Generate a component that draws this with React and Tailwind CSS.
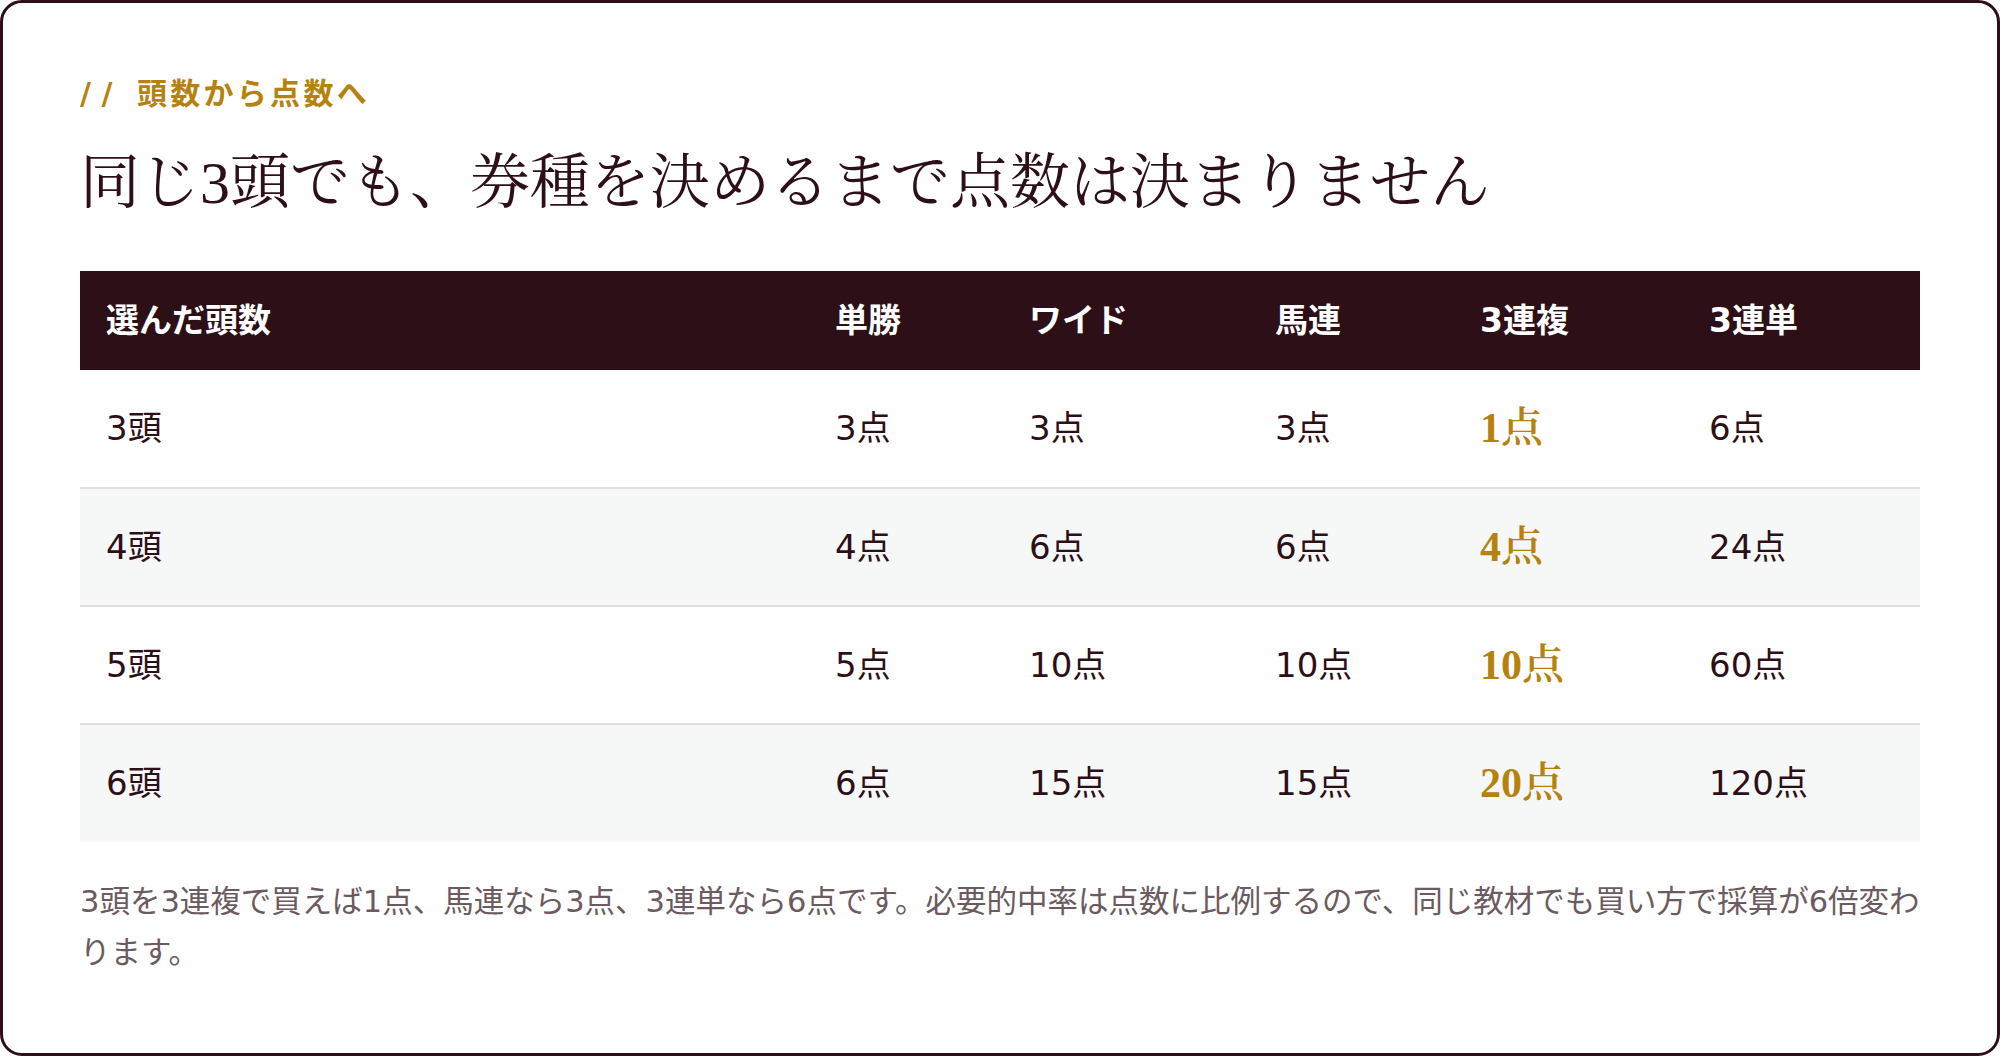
const rows = [
  { heads: "3頭", win: "3点", wide: "3点", quinella: "3点", trio: "1点", trifecta: "6点" },
  { heads: "4頭", win: "4点", wide: "6点", quinella: "6点", trio: "4点", trifecta: "24点" },
  { heads: "5頭", win: "5点", wide: "10点", quinella: "10点", trio: "10点", trifecta: "60点" },
  { heads: "6頭", win: "6点", wide: "15点", quinella: "15点", trio: "20点", trifecta: "120点" },
];

const sans = "font-['DejaVu_Sans','Noto_Sans_CJK_JP',sans-serif]";
const serif = "font-['Liberation_Serif','Noto_Serif_CJK_JP',serif]";

const App = () => {
  return (
    <div className="min-h-screen bg-white">
      <div className={`h-[1056px] border-[3px] border-[#2c0f17] rounded-[22px] px-[77px] pt-[71px] ${sans}`}>
        <p className="text-[30px] leading-[40px] font-bold text-[#b5820f]">
          <span className="tracking-[0.35em]">//</span>
          <span className="ml-[14px] tracking-[0.11em]">頭数から点数へ</span>
        </p>
        <h2 className={`mt-[27px] text-[60px] leading-[84px] text-[#2c0f17] ${serif}`}>
          同じ3頭でも、券種を決めるまで点数は決まりません
        </h2>
        <table className="mt-[46px] w-full border-collapse text-left">
          <thead>
            <tr className="bg-[#2c0f17] text-white h-[99px]">
              <th className="w-[729px] pl-[26px] text-[33px] font-bold">選んだ頭数</th>
              <th className="w-[194px] pl-[26px] text-[33px] font-bold">単勝</th>
              <th className="w-[246px] pl-[26px] text-[33px] font-bold">ワイド</th>
              <th className="w-[205px] pl-[26px] text-[33px] font-bold">馬連</th>
              <th className="w-[229px] pl-[26px] text-[33px] font-bold">3連複</th>
              <th className="w-[237px] pl-[26px] text-[33px] font-bold">3連単</th>
            </tr>
          </thead>
          <tbody>
            {rows.map((r, i) => (
              <tr
                key={r.heads}
                className={`h-[118px] text-[34px] text-[#2c0f17] ${i % 2 === 1 ? "bg-[#f6f7f7]" : "bg-white"} ${i < rows.length - 1 ? "border-b-2 border-[#e4dde0]" : ""}`}
              >
                <td className="pl-[26px]">{r.heads}</td>
                <td className="pl-[26px]">{r.win}</td>
                <td className="pl-[26px]">{r.wide}</td>
                <td className="pl-[26px]">{r.quinella}</td>
                <td className={`pl-[26px] text-[42px] font-semibold text-[#b5820f] ${serif}`}>{r.trio}</td>
                <td className="pl-[26px]">{r.trifecta}</td>
              </tr>
            ))}
          </tbody>
        </table>
        <p className="mt-[34px] text-[30.5px] leading-[51px] text-[#6b5a60]">
          3頭を3連複で買えば1点、馬連なら3点、3連単なら6点です。必要的中率は点数に比例するので、同じ教材でも買い方で採算が6倍変わります。
        </p>
      </div>
    </div>
  );
};

export default App;
